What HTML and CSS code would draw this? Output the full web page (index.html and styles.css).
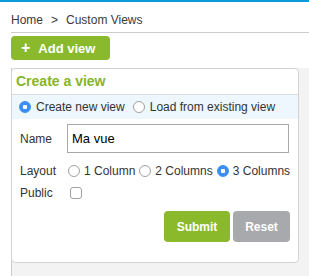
FILE: index.html
```html
<!DOCTYPE html>
<html lang="en">
<head>
    <meta charset="UTF-8">
    <title>Custom Views</title>
    <link rel="stylesheet" href="styles.css">
</head>
<body>
    <div class="topbar"></div>
    <div class="breadcrumb">
        <span>Home</span><span class="sep">&gt;</span><span>Custom Views</span>
    </div>
    <button class="add-button" type="button"><span class="plus">+</span>Add view</button>
    <div class="content">
        <div class="panel">
            <div class="panel-title">Create a view</div>
            <div class="mode-row">
                <label class="radio"><input type="radio" name="mode" checked> Create new view</label>
                <label class="radio"><input type="radio" name="mode"> Load from existing view</label>
            </div>
            <form class="view-form">
                <div class="form-row name-row">
                    <span class="field-label">Name</span>
                    <input class="text-input" type="text" value="Ma vue">
                </div>
                <div class="form-row">
                    <span class="field-label">Layout</span>
                    <label class="radio"><input type="radio" name="layout"> 1 Column</label>
                    <label class="radio"><input type="radio" name="layout"> 2 Columns</label>
                    <label class="radio"><input type="radio" name="layout" checked> 3 Columns</label>
                </div>
                <div class="form-row">
                    <span class="field-label">Public</span>
                    <input class="checkbox" type="checkbox">
                </div>
                <div class="actions">
                    <button type="submit" class="btn btn-submit">Submit</button>
                    <button type="reset" class="btn btn-reset">Reset</button>
                </div>
            </form>
        </div>
    </div>
</body>
</html>
```

FILE: styles.css
```css
body {
  margin: 0;
  font-family: "Liberation Sans", Arial, sans-serif;
  font-size: 12px;
  color: #333;
  background-color: #fff;
}

.topbar {
  height: 2px;
  background-color: #0a9ad9;
}

.breadcrumb {
  margin-left: 11px;
  padding: 11px 0 5px 0;
  line-height: 14px;
  border-bottom: 1px solid #cccccc;
  color: #3a3a3a;
}

.breadcrumb .sep {
  margin: 0 8px;
}

.add-button {
  display: flex;
  align-items: center;
  margin: 3px 0 0 11px;
  width: 99px;
  height: 24px;
  padding: 0 0 0 10px;
  border: none;
  border-radius: 4px;
  background-color: #8ab92b;
  color: #fff;
  font-family: "Liberation Sans", Arial, sans-serif;
  font-size: 13px;
  font-weight: bold;
}

.add-button .plus {
  font-size: 16px;
  margin-right: 8px;
}

.content {
  margin: 8px 0 0 11px;
  padding: 0 10px 20px 0;
  border-left: 1px solid #cccccc;
  background-color: #f3f3f3;
}

.panel {
  margin-left: -1px;
  background-color: #fff;
  border: 1px solid #d3d3d3;
  border-radius: 4px;
  padding-bottom: 20px;
}

.panel-title {
  height: 25px;
  line-height: 25px;
  padding-left: 4px;
  border-bottom: 1px solid #dcdcdc;
  color: #86b52a;
  font-size: 14px;
  font-weight: bold;
}

.mode-row {
  display: flex;
  align-items: center;
  height: 24px;
  padding-left: 7px;
  background-color: #eef7fd;
}

.radio {
  display: flex;
  align-items: center;
  flex-shrink: 0;
  margin-right: 4px;
  white-space: nowrap;
  color: #333;
}

.mode-row .radio {
  margin-right: 8px;
}

.radio input,
.checkbox {
  appearance: none;
  -webkit-appearance: none;
  flex-shrink: 0;
  width: 12px;
  height: 12px;
  margin: 0 4px 0 0;
  border: 1px solid #a0a0a0;
  border-radius: 50%;
  background-color: #fff;
}

.mode-row .radio input {
  margin-right: 5px;
}

.radio input:checked {
  border-color: #3b8ff3;
  background: radial-gradient(circle, #fff 0, #fff 2px, #3b8ff3 2.5px);
}

.checkbox {
  border-radius: 3px;
  margin-left: 2px;
}

.view-form {
  padding: 5px 8px 0 8px;
}

.form-row {
  display: flex;
  align-items: center;
  height: 18px;
  margin-bottom: 4px;
}

.name-row {
  height: 29px;
  margin-bottom: 9px;
}

.field-label {
  flex-shrink: 0;
  width: 48px;
  color: #333;
}

.text-input {
  flex: 1;
  height: 29px;
  box-sizing: border-box;
  margin: 0 1px 0 -1px;
  padding: 0 4px;
  border: 1px solid #a9a9a9;
  font-family: "Liberation Sans", Arial, sans-serif;
  font-size: 13px;
  color: #000;
}

.actions {
  display: flex;
  justify-content: flex-end;
  gap: 3px;
  margin-top: 9px;
}

.btn {
  height: 31px;
  border: none;
  border-radius: 4px;
  color: #fff;
  font-family: "Liberation Sans", Arial, sans-serif;
  font-size: 12px;
  font-weight: bold;
}

.btn-submit {
  width: 66px;
  background-color: #8ab92b;
}

.btn-reset {
  width: 57px;
  background-color: #a8a9ac;
}
```
